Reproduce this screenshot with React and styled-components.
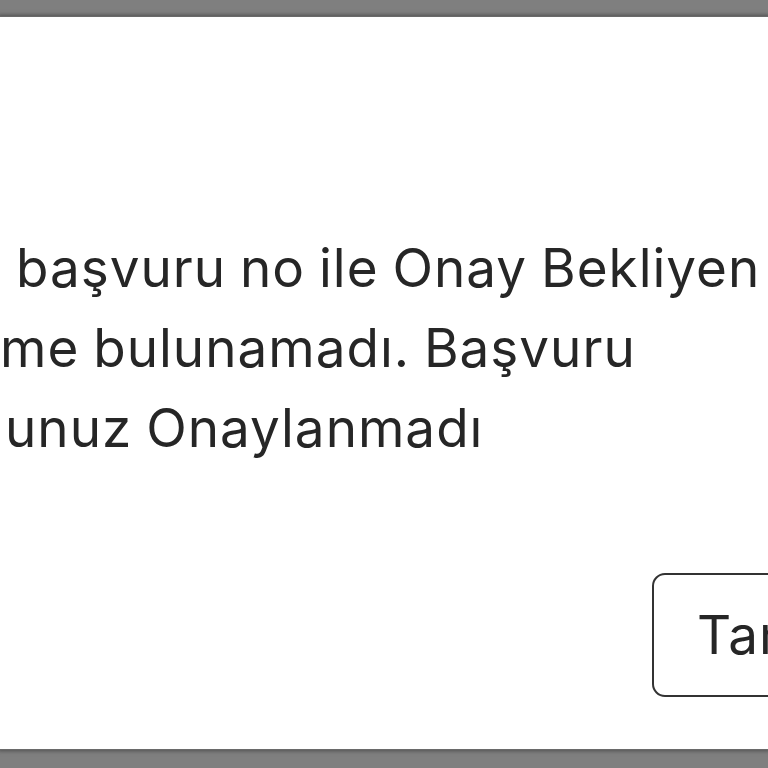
import React from "react";
import styled, { createGlobalStyle } from "styled-components";

const GlobalStyle = createGlobalStyle`
  html, body {
    margin: 0;
    padding: 0;
    background: #7f7f7f;
  }
  body {
    font-family: "Inter", "Noto Sans", sans-serif;
  }
`;

const Screen = styled.div`
  width: 768px;
  height: 768px;
  overflow: hidden;
  background: #7f7f7f;
  padding-top: 17px;
  box-sizing: border-box;
`;

const Dialog = styled.div`
  height: 732px;
  background: #fff;
  box-shadow: 0 0 0 1px #6a6a6a, 0 0 4px 2px rgba(40, 40, 40, 0.55);
  overflow: hidden;
  display: flex;
  flex-direction: column;
  padding-top: 211px;
  box-sizing: border-box;
`;

const Message = styled.div`
  color: #262626;
  font-size: 53px;
  letter-spacing: 1px;
  word-spacing: -2px;
  line-height: 80px;
  white-space: nowrap;
`;

const Line = styled.div`
  padding-left: ${(p) => p.$pad}px;
`;

const Footer = styled.div`
  display: flex;
  padding-left: 652px;
  margin-top: 105px;
`;

const OkButton = styled.button`
  flex-shrink: 0;
  height: 124px;
  padding: 0 43px;
  border: 2.5px solid #333;
  border-radius: 13px;
  background: #fff;
  color: #262626;
  font-family: "Inter", "Noto Sans", sans-serif;
  font-size: 53px;
  letter-spacing: 1px;
  white-space: nowrap;
`;

export default function App() {
  return (
    <>
      <GlobalStyle />
      <Screen>
        <Dialog>
          <Message>
            <Line $pad={16}>başvuru no ile Onay Bekliyen</Line>
            <Line $pad={0}>me bulunamadı. Başvuru</Line>
            <Line $pad={5}>unuz Onaylanmadı</Line>
          </Message>
          <Footer>
            <OkButton>Tamam</OkButton>
          </Footer>
        </Dialog>
      </Screen>
    </>
  );
}
